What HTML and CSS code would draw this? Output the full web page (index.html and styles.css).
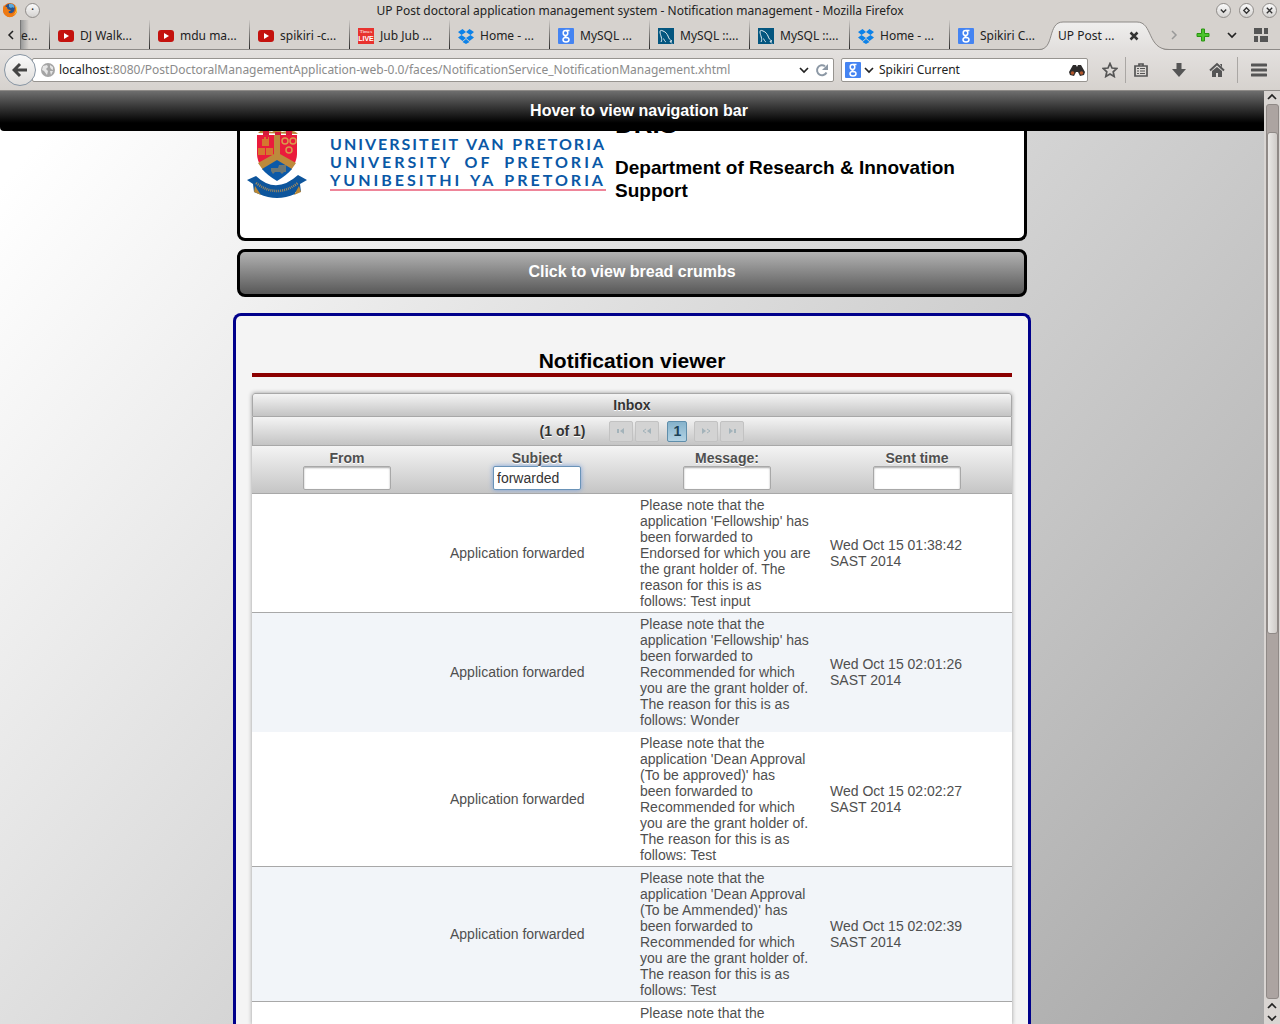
FILE: index.html
```html
<!DOCTYPE html>
<html lang="en">
<head>
<meta charset="utf-8">
<title>UP Post doctoral application management system - Notification management</title>
<link rel="stylesheet" href="styles.css">
</head>
<body>
<svg class="defs" aria-hidden="true">
  <symbol id="youtube" viewBox="0 0 16 16"><rect y="2" width="16" height="12" rx="3" fill="#c4120e"/><path d="M6 5v6l5-3z" fill="#fff"/></symbol>
  <symbol id="dropbox" viewBox="0 0 16 16"><path d="M4.500 1 0 4l3.500 3L8 4zM11.500 1 16 4l-3.500 3L8 4zM0 9.500 3.500 7 8 10l-3.500 3zM16 9.500 12.500 7 8 10l3.500 3zM4.500 14 8 11l3.500 3L8 16z" fill="#0d82e8"/></symbol>
  <symbol id="google" viewBox="0 0 16 16"><rect width="16" height="16" rx="1" fill="#4584f2"/><g fill="none" stroke="#fff" stroke-width="1.500"><ellipse cx="7.500" cy="5" rx="2.300" ry="2.500"/><ellipse cx="8" cy="11.800" rx="3" ry="2.200"/><path d="M7.500 7.500c-1.500 1 1 1.500 2 2.500M8 2.500h3.500"/></g></symbol>
  <symbol id="mysql" viewBox="0 0 16 16"><rect width="16" height="16" fill="#04567f"/><path d="M3 14C5 11 2 7 2 4c0-2 1-2 3-1 3 1 4 3 5 5 1 3 2 4 4 5l-2 .5 2 2M5 11c1-1 1 2 3 3" fill="none" stroke="#dfeaf0"/></symbol>
  <symbol id="chev" viewBox="0 0 10 10"><path d="m1 3 4 4 4-4" fill="none" stroke="currentColor" stroke-width="1.700"/></symbol>
</svg>

<header class="chrome">
  <div class="titlebar">
    <svg class="i16" viewBox="0 0 16 16"><circle cx="8" cy="8" r="7" fill="#e66a10"/><circle cx="8" cy="6.500" r="4.800" fill="#27548f"/><path d="M7 2c4-1 6 2 5 4-1-1-2-1-3 0l-2-1z" fill="#5aa9dd"/><path d="M2 3C0 7 1 13 6 15c5 1 9-3 9-8-1 3-3 5-6 5-3-1-3-3-1-3l1-1C6 8 5 7 5 5 4 5 3 5 2 3z" fill="#ee7a13"/><path d="M13 4c2 3 1 7-2 9 3-1 4-3 4-6 0-2-1-3-2-3z" fill="#ffd33c"/></svg>
    <button class="round menu" aria-label="Window menu">·</button>
    <h1 class="window-title">UP Post doctoral application management system - Notification management - Mozilla Firefox</h1>
    <div class="window-buttons">
      <button class="round" aria-label="Minimize"><svg viewBox="0 0 10 10"><path d="m2 4 3 3 3-3" fill="none" stroke="#333" stroke-width="1.500"/></svg></button>
      <button class="round" aria-label="Maximize"><svg viewBox="0 0 10 10"><path d="m5 2 3 3-3 3-3-3z" fill="none" stroke="#333" stroke-width="1.500"/></svg></button>
      <button class="round" aria-label="Close"><svg viewBox="0 0 10 10"><path d="m2 2 6 6m0-6L2 8" stroke="#333" stroke-width="1.500"/></svg></button>
    </div>
  </div>

  <nav class="tabs" aria-label="Tabs">
    <button class="scroll-left" aria-label="Scroll tabs left"><svg class="i10" viewBox="0 0 10 10"><path d="M7 1 3 5l4 4" fill="none" stroke="#222" stroke-width="1.500"/></svg></button>
    <a class="tab cut" href="#">e...</a>
    <a class="tab" href="#"><svg class="i16"><use href="#youtube"/></svg>DJ Walk...</a>
    <a class="tab" href="#"><svg class="i16"><use href="#youtube"/></svg>mdu ma...</a>
    <a class="tab" href="#"><svg class="i16"><use href="#youtube"/></svg>spikiri -c...</a>
    <a class="tab" href="#"><span class="live"><small>Times</small>LIVE</span>Jub Jub ...</a>
    <a class="tab" href="#"><svg class="i16"><use href="#dropbox"/></svg>Home - ...</a>
    <a class="tab" href="#"><svg class="i16"><use href="#google"/></svg>MySQL ...</a>
    <a class="tab" href="#"><svg class="i16"><use href="#mysql"/></svg>MySQL ::...</a>
    <a class="tab" href="#"><svg class="i16"><use href="#mysql"/></svg>MySQL ::...</a>
    <a class="tab" href="#"><svg class="i16"><use href="#dropbox"/></svg>Home - ...</a>
    <a class="tab last" href="#"><svg class="i16"><use href="#google"/></svg>Spikiri C...</a>
    <a class="tab active" href="#" aria-current="page">
      <svg class="shape" viewBox="0 0 130 30"><defs><linearGradient id="tabfill" x2="0" y2="1"><stop stop-color="#f0efee"/><stop offset="1" stop-color="#e2dfdd"/></linearGradient></defs><path d="M0 30C16 30 8 2 24 2h74c16 0 10 28 32 28z" fill="url(#tabfill)"/><path d="M0 29.500C16 29.500 8 2 24 2h74c16 0 10 27.500 32 27.500" fill="none" stroke="#8d8a87"/></svg>
      <span>UP Post ...</span>
      <svg class="i10" viewBox="0 0 10 10"><path d="m1.500 1.500 7 7m0-7-7 7" stroke="#333" stroke-width="2.500"/></svg>
    </a>
    <div class="tab-tools">
      <svg class="i10" viewBox="0 0 10 10"><path d="m3 1 4 4-4 4" fill="none" stroke="#999" stroke-width="1.500"/></svg>
      <svg class="i16" viewBox="0 0 16 16"><path d="M6.500 2h3v4.500H14v3H9.500V14h-3V9.500H2v-3h4.500z" fill="#4cc42c" stroke="#2a9412"/></svg>
      <svg class="i10"><use href="#chev"/></svg>
      <svg class="i16" viewBox="0 0 16 16"><path d="M1 1h8v6H1zM11 1h4v6h-4zM1 9h4v6H1zM7 9h8v6H7z" fill="#555"/></svg>
    </div>
  </nav>

  <div class="toolbar">
    <button class="back" aria-label="Back"><svg class="i16" viewBox="0 0 16 16"><path d="M8 2 2 8l6 6M3 8h12" fill="none" stroke="#444" stroke-width="3"/></svg></button>
    <form class="address">
      <svg class="i16" viewBox="0 0 16 16"><circle cx="8" cy="8" r="7" fill="#a5a5a5"/><path d="m3 4 4-1 1 2-2 2 2 2-1 4-3-4-2-1zM10 3l3 2v3l-2-1-1-2zM10 9l3 0-2 4z" fill="#e6e6e6"/></svg>
      <div class="url"><b>localhost</b>:8080/PostDoctoralManagementApplication-web-0.0/faces/NotificationService_NotificationManagement.xhtml</div>
      <svg class="i10"><use href="#chev"/></svg>
      <svg class="i14" viewBox="0 0 14 14"><path d="M11.500 9.500A5 5 0 1 1 10 3.200" fill="none" stroke="#8c98a5" stroke-width="2"/><path d="M13 1v6H7z" fill="#8c98a5"/></svg>
    </form>
    <form class="search">
      <svg class="i16"><use href="#google"/></svg>
      <svg class="i10"><use href="#chev"/></svg>
      <input class="query" value="Spikiri Current" aria-label="Search">
      <svg class="i16" viewBox="0 0 16 16"><path d="M4 3h3l1 2 1-2h3l4 7-1 3-4 1-2-4H7l-2 4-4-1-1-3z" fill="#2d2b2b"/><circle cx="3.500" cy="11" r="1.800" fill="#b0552a"/><circle cx="12.500" cy="11" r="1.800" fill="#b0552a"/></svg>
    </form>
    <div class="tools">
      <svg class="i16" viewBox="0 0 16 16"><path d="m8 1.500 2 4.500 4.800.5-3.600 3.300 1 4.700L8 12l-4.200 2.500 1-4.700L1.200 6.500 6 6z" fill="none" stroke="#555" stroke-width="1.700"/></svg>
      <i class="sep"></i>
      <svg class="i16" viewBox="0 0 16 16"><path d="M2 4h12v10H2zM6 4V2h4v2" fill="none" stroke="#555" stroke-width="1.700"/><path d="M4 6.500h2m1 0h5M4 9h2m1 0h5M4 11.500h2m1 0h5" stroke="#555"/></svg>
      <svg class="i16 spaced" viewBox="0 0 16 16"><path d="M5.500 1h5v6H15l-7 8-7-8h4.500z" fill="#555"/></svg>
      <svg class="i16 spaced" viewBox="0 0 16 16"><path d="M1 8.500 8 2l7 6.500" fill="none" stroke="#555" stroke-width="2"/><path d="m8 5 5 4v6H9v-4H7v4H3V9zM11 2h2v4z" fill="#555"/></svg>
      <i class="sep end"></i>
      <svg class="i16" viewBox="0 0 16 16"><path d="M1 3h14M1 8h14M1 13h14" stroke="#555" stroke-width="3" stroke-linecap="round"/></svg>
    </div>
  </div>
</header>

<div class="viewport">
  <main class="page">
    <button class="navbar">Hover to view navigation bar</button>
    <section class="banner">
      <svg class="crest" viewBox="0 0 62 70">
        <path d="M12 5q4-5 9-2l5 1 5-3 5 3 6-1q6-1 10 3z" fill="#b98736"/><path d="M17 3h6v4h-6zm12 1h6v3h-6zm11-1h6v4h-6z" fill="#d51c3a"/>
        <path d="M11 7h40v19q0 14-20 26Q11 40 11 26z" fill="#ea1b3c"/>
        <path d="M28 7h6v19l16 9-5 7-14-9-14 9-5-7 16-9z" fill="#bd8a3c"/>
        <path d="m31 32 15 9q-5 6-15 12-10-6-15-12z" fill="#0b59a8"/>
        <g fill="none" stroke="#d99a4c" stroke-width="1.500"><circle cx="39" cy="13" r="3"/><circle cx="47" cy="13" r="3"/><circle cx="43" cy="22" r="3"/></g>
        <g fill="#d5772f"><path d="M16 11h2v-2h2v2h2V9h1v9h-7zM12 20h7v7h-7zM20 20h7v7h-7z"/></g>
        <path d="M25 43v-3h7l1-3h7v7h-2l-2 2-2-2h-5l-2 2z" fill="#6c7775"/>
        <path d="m1 52 9-4q20 19 42-1l9 5-7 4 1 8q-6-2-6 2-18 8-36 0l-5-2-1-8z" fill="#0d559c"/>
        <path d="m9 58 6 9-7-3zM53 58l-5 9 7-3z" fill="#b98736"/>
        <path d="M10 55q21 16 42 0" fill="none" stroke="#a58b5c" stroke-width="2.500" stroke-dasharray="1 1"/>
      </svg>
      <div class="wordmark"><p>UNIVERSITEIT VAN PRETORIA</p><p class="wide">UNIVERSITY OF PRETORIA</p><p class="wide">YUNIBESITHI YA PRETORIA</p></div>
      <div class="department"><h2>DRIS</h2><h3>Department of Research &amp; Innovation Support</h3></div>
    </section>
    <button class="crumbs">Click to view bread crumbs</button>

    <section class="viewer">
      <h2>Notification viewer</h2>
      <div class="datatable">
        <div class="caption">Inbox</div>
        <div class="paginator">
          <span>(1 of 1)</span>
          <div class="pages">
            <button disabled aria-label="First"><svg viewBox="0 0 10 8"><path d="M1 2h2v4H1zM8 1v6L4 4z"/></svg></button>
            <button disabled aria-label="Previous"><svg viewBox="0 0 10 8"><path d="M9 1v6L5 4z"/><path d="M4 2 1 4l3 2" class="line"/></svg></button>
            <button class="current">1</button>
            <button disabled aria-label="Next"><svg viewBox="0 0 10 8"><path d="M1 1v6l4-3z"/><path d="m6 2 3 2-3 2" class="line"/></svg></button>
            <button disabled aria-label="Last"><svg viewBox="0 0 10 8"><path d="M2 1v6l4-3zM7 2h2v4H7z"/></svg></button>
          </div>
        </div>
        <table>
          <thead><tr>
            <th><label for="from">From</label><input id="from"></th>
            <th><label for="subject">Subject</label><input id="subject" class="focused" value="forwarded"></th>
            <th><label for="message">Message:</label><input id="message"></th>
            <th><label for="sent">Sent time</label><input id="sent"></th>
          </tr></thead>
          <tbody>
            <tr><td></td><td>Application forwarded</td><td>Please note that the application 'Fellowship' has been forwarded to Endorsed for which you are the grant holder of. The reason for this is as follows:&nbsp;Test input</td><td>Wed Oct 15 01:38:42 SAST 2014</td></tr>
            <tr class="open"><td></td><td>Application forwarded</td><td>Please note that the application 'Fellowship' has been forwarded to Recommended for which you are the grant holder of. The reason for this is as follows:&nbsp;Wonder</td><td>Wed Oct 15 02:01:26 SAST 2014</td></tr>
            <tr><td></td><td>Application forwarded</td><td>Please note that the application 'Dean Approval (To be approved)' has been&nbsp;forwarded to Recommended for which you are the grant holder of. The reason for this is as follows:&nbsp;Test</td><td>Wed Oct 15 02:02:27 SAST 2014</td></tr>
            <tr><td></td><td>Application forwarded</td><td>Please note that the application 'Dean Approval (To be Ammended)' has been&nbsp;forwarded to Recommended for which you are the grant holder of. The reason for this is as follows:&nbsp;Test</td><td>Wed Oct 15 02:02:39 SAST 2014</td></tr>
            <tr><td></td><td></td><td>Please note that the</td><td></td></tr>
          </tbody>
        </table>
      </div>
    </section>
  </main>
  <div class="scrollbar" aria-hidden="true">
    <svg class="i10 up"><use href="#chev"/></svg>
    <div class="track"><div class="thumb"></div></div>
    <svg class="i10 up"><use href="#chev"/></svg>
    <svg class="i10"><use href="#chev"/></svg>
  </div>
</div>
</body>
</html>
```
FILE: styles.css
```css
* { box-sizing: border-box; }
body {
  margin: 0;
  height: 100vh;
  display: flex;
  flex-direction: column;
  overflow: hidden;
  background: #d6d2ce;
  color: #222;
  font: 12px/16px "Noto Sans", sans-serif;
}
h1, h2, h3, p { margin: 0; }
button, input { font: inherit; color: inherit; padding: 0; }
a { color: inherit; text-decoration: none; }
svg { display: block; flex: none; }
.defs { position: absolute; width: 0; height: 0; }
.i16 { width: 16px; height: 16px; }
.i14 { width: 14px; height: 14px; }
.i10 { width: 10px; height: 10px; }

/* Window title */
.titlebar { height: 20px; display: flex; align-items: center; padding: 0 3px 0 2px; }
.window-title { flex: 1; text-align: center; font-size: 12px; line-height: 18px; font-weight: 400; padding: 2px 0 0 24px; }
.window-buttons { display: flex; gap: 8px; }
.round {
  width: 15px; height: 15px;
  display: grid; place-items: center;
  border: 1px solid #8f8c89; border-radius: 50%;
  background: linear-gradient(#fafafa, #d5d3d1);
  line-height: 10px;
}
.round.menu { margin-left: 7px; }
.round svg { width: 9px; height: 9px; }

/* Tab strip */
.tabs { height: 30px; display: flex; border-bottom: 1px solid #8d8a87; }
.scroll-left { width: 21px; border: 0; background: none; display: grid; place-items: center; box-shadow: inset -1px 0 #777; }
.tab {
  flex: 0 1 100px;
  display: flex; align-items: center; gap: 6px;
  padding: 2px 0 0 8px;
  white-space: nowrap;
  border-right: 1px solid;
  border-image: linear-gradient(#d6d2ce, #222) 1;
}
.tab.cut { flex-basis: 29px; padding-left: 0; background: linear-gradient(90deg, #999, transparent 8px); }
.tab.last { flex-basis: 90px; border: 0; }
.tab.active { position: relative; flex: 0 0 130px; border: 0; padding-left: 19px; gap: 14px; margin-left: -1px; }
.tab.active span, .tab.active .i10 { position: relative; }
.shape { position: absolute; left: 0; top: 0; width: 130px; height: 30px; }
.live { width: 16px; height: 16px; background: #e8322e; color: #fff; font: bold 7px/8px "Liberation Sans", sans-serif; text-align: center; overflow: hidden; }
.live small { display: block; font: 5px/7px "Liberation Serif", serif; }
.tab-tools { flex: 1; display: flex; align-items: center; justify-content: space-between; padding: 0 11px 0 0; }

/* Navigation toolbar */
.toolbar { height: 41px; display: flex; align-items: center; padding: 0 13px 0 4px; background: linear-gradient(#e3e0de, #d6d2ce); border-bottom: 1px solid #8d8a87; }
.back { position: relative; width: 32px; height: 32px; flex: none; display: grid; place-items: center; border: 1px solid #8795a3; border-radius: 50%; background: linear-gradient(#fafafa, #dfdddb); }
.address, .search { display: flex; align-items: center; height: 24px; background: #fff; border: 1px solid #979490; border-radius: 2px; }
.address { flex: 1; margin-left: -4px; padding: 0 4px 0 7px; gap: 3px; min-width: 0; }
.url { flex: 1; min-width: 0; overflow: hidden; white-space: nowrap; color: #8b8b8b; }
.url b { font-weight: 400; color: #222; }
.address .i14 { margin-left: 3px; }
.search { width: 247px; margin-left: 7px; padding: 0 2px 0 3px; gap: 3px; }
.query { flex: 1; min-width: 0; border: 0; outline: 0; padding-left: 2px; background: none; }
.tools { display: flex; align-items: center; margin-left: 14px; gap: 7px; color: #555; }
.sep { width: 1px; height: 26px; background: #aaa7a4; }
.spaced { margin-left: 15px; }
.sep.end { margin: 0 6px 0 5px; }

/* Web page */
.viewport { flex: 1; min-height: 0; display: flex; }
.page {
  flex: 1; position: relative; min-width: 0; overflow: hidden;
  display: flex; flex-direction: column; align-items: center;
  color: #000;
  font-family: "Liberation Sans", Arial, sans-serif;
  background: linear-gradient(131deg, #fff 4%, #a8a8a8);
}
.navbar {
  position: absolute; inset: 0 0 auto; height: 40px; width: 100%; z-index: 1;
  border: 0; border-radius: 0 0 0 4px; padding-left: 14px;
  background: linear-gradient(#6e6e6e, #000 80%);
  color: #fff; font: bold 16px/20px "Liberation Sans", Arial, sans-serif;
}
.banner {
  width: 790px; height: 150px; flex: none;
  display: grid; grid-template-columns: 62px 298px 1fr;
  align-items: start;
  padding: 0 40px 0 6px;
  border: 3px solid #000; border-top: 0; border-radius: 0 0 8px 8px;
  background: #fff;
}
.crest { width: 62px; height: 70px; margin-top: 37px; }
.wordmark { margin: 44px 0 0 22px; border-bottom: 2px solid #ee8599; color: #0a58a6; font: bold 16px/18px Lato, sans-serif; letter-spacing: 2px; }
.wordmark p { text-align-last: justify; white-space: nowrap; }
.wordmark .wide { letter-spacing: 3px; }
.department { margin-left: 9px; }
.department h2 { font-size: 26px; line-height: 30px; margin-top: 18px; }
.department h3 { font-size: 19px; line-height: 23px; margin-top: 17px; }
.crumbs {
  width: 790px; height: 48px; margin-top: 8px; flex: none;
  border: 3px solid #000; border-radius: 8px; padding-bottom: 2px;
  background: linear-gradient(#b2b2b2, #585858);
  color: #fff; font: bold 16px/20px "Liberation Sans", Arial, sans-serif;
}
.viewer {
  width: 798px; margin-top: 16px; flex: 1 0 auto;
  border: 3px solid #00008b; border-bottom: 0; border-radius: 8px 8px 0 0;
  padding: 32px 16px 0;
  background: #f4f4f4;
}
.viewer h2 { text-align: center; font-size: 21px; line-height: 25px; border-bottom: 4px solid #8b0000; margin-bottom: 16px; }

/* Notification table */
.datatable { font-size: 14px; line-height: 16px; color: #4f4f4f; box-shadow: 0 0 4px #999; border-radius: 3px 3px 0 0; }
.caption, .paginator { border: 1px solid #a8a8a8; background: linear-gradient(#f4f4f4, #c4c4c4); color: #333; font-weight: bold; text-shadow: 0 1px 0 #fff; }
.caption { height: 24px; line-height: 22px; text-align: center; border-radius: 3px 3px 0 0; }
.paginator { height: 29px; border-top: 0; display: flex; align-items: center; justify-content: center; gap: 24px; padding-left: 20px; }
.pages { display: flex; gap: 2px; }
.pages button { width: 24px; height: 21px; display: grid; place-items: center; border: 1px solid #c2c2c2; border-radius: 2px; background: #d3d3d3; }
.pages svg { width: 10px; height: 8px; fill: #a3b3ba; }
.pages .line { fill: none; stroke: #a3b3ba; }
.pages .current { width: 20px; margin: 0 5px 0 6px; border-color: #5f8eab; background: linear-gradient(#85b2cb, #b3d2e3); color: #1c4257; }
table { width: 100%; table-layout: fixed; border-collapse: collapse; background: #fff; }
thead { background: linear-gradient(#f4f4f4, #c4c4c4); }
th { padding: 4px 0 3px; text-align: center; text-shadow: 0 1px 0 #fff; border-bottom: 1px solid #a8a8a8; }
th label { display: block; }
th input { display: block; width: 88px; height: 24px; margin: 0 auto; padding: 0 3px; border: 1px solid #a8a8a8; border-radius: 2px; background: #fff; color: #333; font-weight: 400; outline: 0; box-shadow: inset 0 1px 2px #aaa; }
th .focused { border-color: #6a93b8; box-shadow: 0 0 5px #7ba0dc; }
td { padding: 3px 10px 3px 8px; vertical-align: middle; }
tbody tr { border-bottom: 1px solid #a8a8a8; }
tbody tr:nth-child(even) { background: #f2f5f9; }
tbody tr.open { border-bottom-color: #f2f5f9; }

/* Scrollbar */
.scrollbar { width: 16px; display: flex; flex-direction: column; align-items: center; gap: 2px; padding: 1px 0; background: #d9d5d2; color: #222; }
.scrollbar .up { transform: rotate(180deg); }
.track { flex: 1; width: 13px; padding-top: 27px; border: 1px solid #8f8986; border-radius: 3px; background: #aca4a1; }
.thumb { height: 502px; border: 1px solid #8f8986; border-radius: 3px; background: linear-gradient(90deg, #eae8e6, #cfcbc8); }
```
